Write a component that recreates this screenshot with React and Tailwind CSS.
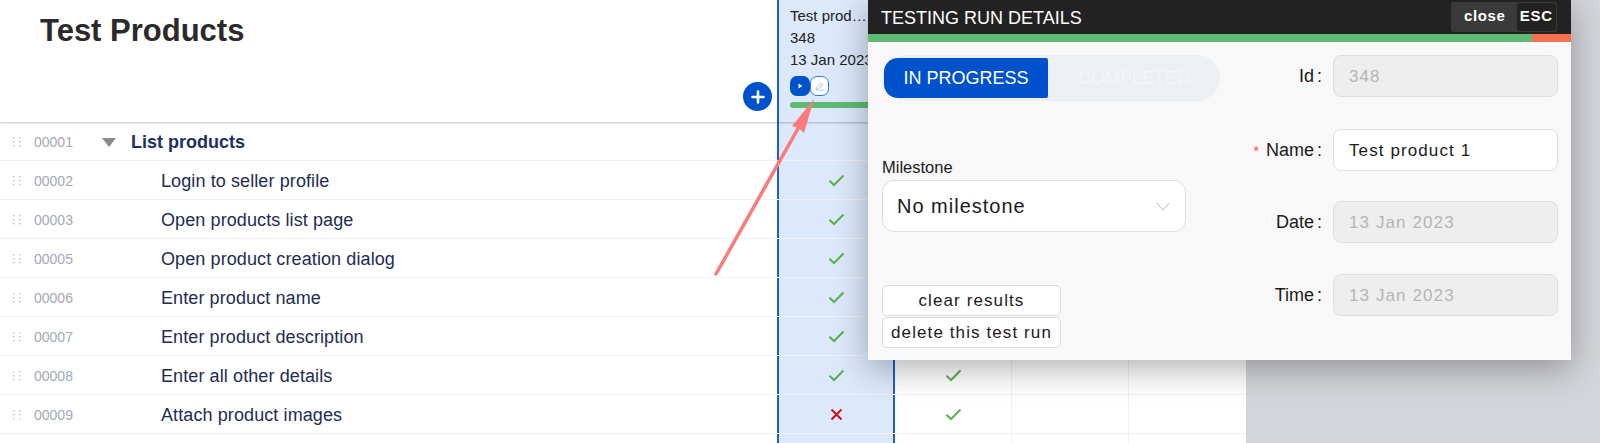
import React from "react";

const rows = [
  { id: "00001", name: "List products", group: true, a: null, b: null },
  { id: "00002", name: "Login to seller profile", a: "ok" },
  { id: "00003", name: "Open products list page", a: "ok" },
  { id: "00005", name: "Open product creation dialog", a: "ok" },
  { id: "00006", name: "Enter product name", a: "ok" },
  { id: "00007", name: "Enter product description", a: "ok" },
  { id: "00008", name: "Enter all other details", a: "ok", b: "ok" },
  { id: "00009", name: "Attach product images", a: "no", b: "ok" },
  { id: "", name: "" },
];

function Mark({ v }) {
  if (v === "ok")
    return (
      <svg width="17" height="13" viewBox="0 0 17 13" fill="none">
        <path d="M1.5 6.8 L6 11 L15.5 1.5" stroke="#5cb04f" strokeWidth="2" />
      </svg>
    );
  if (v === "no")
    return (
      <svg width="13" height="13" viewBox="0 0 13 13" fill="none">
        <path d="M1.5 1.5 L11.5 11.5 M11.5 1.5 L1.5 11.5" stroke="#cc1218" strokeWidth="2" />
      </svg>
    );
  return null;
}

function Grip() {
  return (
    <svg width="8" height="10" viewBox="0 0 8 10" fill="#b9bfca">
      {[0, 4, 8].map((y) => (
        <g key={y}>
          <rect x="0" y={y} width="1.4" height="1.4" />
          <rect x="6" y={y} width="1.4" height="1.4" />
        </g>
      ))}
    </svg>
  );
}

function Field({ label, value, disabled, required, className }) {
  return (
    <div className={"flex items-center h-[42px] " + (className || "")}>
      <div className="w-[115px] flex justify-end items-center pr-[11px] pt-[1px] text-[18px] text-[#1a1a1a]">
        {required && <span className="text-[#ff4d4f] mr-[7px] text-[15px] leading-none">*</span>}
        <span>{label}</span>
        <span className="ml-[3px]">:</span>
      </div>
      <div
        className={
          "w-[225px] h-[42px] rounded-[8px] border flex items-center px-[15px] pt-[1px] text-[17px] tracking-[1.1px] " +
          (disabled
            ? "bg-[#eeeeef] border-[#dfdfdf] text-[#b5b5b5]"
            : "bg-white border-[#e0e0e0] text-[#1a1a1a]")
        }
      >
        {value}
      </div>
    </div>
  );
}

export default function App() {
  return (
    <div
      className="relative w-[1600px] h-[443px] overflow-hidden bg-[#d4d5da] text-[#1a1a1a]"
      style={{ fontFamily: '"Liberation Sans", Arial, sans-serif' }}
    >
      <div className="w-[1246px] h-full bg-white flex flex-col">
        {/* Header */}
        <div className="h-[122px] flex shrink-0 shadow-[0_1px_2px_rgba(0,0,0,0.25)] relative z-[1] bg-white">
          <div className="w-[777px] shrink-0 relative pl-[40px] pt-[13px]">
            <h1 className="text-[31px] leading-[36px] font-bold text-[#2a2a2a]">Test Products</h1>
            <div className="absolute left-[743px] top-[82px] w-[29px] h-[29px] rounded-full bg-[#0052cc] flex items-center justify-center">
              <svg width="14" height="14" viewBox="0 0 14 14">
                <path d="M7 1.5 V12.5 M1.5 7 H12.5" stroke="#fff" strokeWidth="2.6" strokeLinecap="round" />
              </svg>
            </div>
          </div>
          <div className="w-[118px] shrink-0 bg-[#dce8fc] border-l-2 border-r-2 border-l-[#1f5fc8] border-r-transparent pl-[11px] pt-[5px] text-[15px] leading-[22px] text-[#222]">
            <div className="whitespace-nowrap">Test prod…</div>
            <div>348</div>
            <div className="whitespace-nowrap">13 Jan 2023</div>
            <div className="flex mt-[5px] h-[20px]">
              <div className="w-[20px] h-[20px] rounded-[7px] bg-[#0052cc] flex items-center justify-center">
                <svg width="5" height="6" viewBox="0 0 5 6"><path d="M0.5 0.5 L4.5 3 L0.5 5.5 Z" fill="#fff" /></svg>
              </div>
              <div className="w-[19px] h-[20px] rounded-[7px] bg-white border border-[#2f7be0] flex items-center justify-center">
                <svg width="9" height="9" viewBox="0 0 9 9" fill="none">
                  <path d="M1 8 L1.6 5.8 L6 1.4 L7.6 3 L3.2 7.4 Z M4.5 8.3 H8.3" stroke="#7d9ed6" strokeWidth="0.7" />
                </svg>
              </div>
            </div>
            <div className="mt-[6px] h-[6px] w-[120px] rounded-l-[3px] bg-[#5fbb72]" />
          </div>
          <div className="flex-1 bg-white" />
        </div>

        {/* Rows */}
        <div className="flex-1 flex flex-col">
          {rows.map((r, i) => (
            <div key={i} className="flex h-[39px] shrink-0 border-b border-[#f0f1f6]">
              <div className="w-[777px] shrink-0 flex items-center pt-[2px]">
                <div className="w-[34px] pl-[13px] flex items-center">{r.id && <Grip />}</div>
                <div className="w-[68px] text-[14px] text-[#a2a9ba]">{r.id}</div>
                {r.group ? (
                  <div className="flex items-center">
                    <svg width="14" height="9" viewBox="0 0 14 9" className="mr-[15px]">
                      <path d="M0 0 H14 L7 9 Z" fill="#8a8a8a" />
                    </svg>
                    <span className="text-[18px] font-bold text-[#1c3160]">{r.name}</span>
                  </div>
                ) : (
                  <span className="pl-[59px] text-[18px] tracking-[0.1px] text-[#1c2c55]">{r.name}</span>
                )}
              </div>
              <div className="w-[118px] shrink-0 bg-[#dce8fc] border-l-2 border-r-2 border-l-[#1f5fc8] border-r-[#1f5fc8] flex items-center justify-center">
                <Mark v={r.a} />
              </div>
              <div className="w-[117px] shrink-0 border-r border-[#f0f1f6] flex items-center justify-center">
                <Mark v={r.b} />
              </div>
              <div className="w-[117px] shrink-0 border-r border-[#f0f1f6]" />
              <div className="flex-1" />
            </div>
          ))}
        </div>
      </div>

      {/* Modal */}
      <div className="absolute left-[868px] top-0 w-[703px] h-[360px] bg-[#f8f8f9] shadow-[0_8px_32px_rgba(0,0,0,0.32)] z-10 flex flex-col">
        <div className="h-[34px] shrink-0 bg-[#222222] flex items-center justify-between pl-[13px] pr-[14px]">
          <span className="text-[18px] text-white pt-[3px]">TESTING RUN DETAILS</span>
          <div className="flex items-center h-[30px] w-[106px] rounded-[3px] bg-[#3a3a3a] pl-[13px] pr-[1px] py-[1px] mt-[-1px] font-bold text-[15px] tracking-[0.6px] text-white justify-between">
            <span>close</span>
            <span className="bg-[#222222] rounded-[3px] px-[3px] h-full flex items-center tracking-[0.8px]">ESC</span>
          </div>
        </div>
        <div className="h-[8px] shrink-0 flex">
          <div className="flex-1 bg-[#5fbb72]" />
          <div className="w-[39px] bg-[#f9704e]" />
        </div>
        <div className="flex flex-1">
          <div className="w-[350px] shrink-0 pl-[14px] pt-[13px] flex flex-col">
            <div className="w-[338px] h-[46px] rounded-[23px] bg-[#edf0f2] flex items-center pl-[2px]">
              <div className="w-[164px] h-[40px] bg-[#0052cc] rounded-l-[14px] rounded-r-[2px] flex items-center justify-center text-white text-[18px]">
                IN PROGRESS
              </div>
              <div className="flex-1 text-center text-[18px] text-[#f4f5f6]">COMPLETED</div>
            </div>
            <div className="mt-[56px] text-[16.5px] leading-[20px] text-[#1a1a1a]">Milestone</div>
            <div className="mt-[3px] w-[304px] h-[52px] rounded-[12px] bg-white border border-[#dedede] flex items-center justify-between pl-[14px] pr-[15px]">
              <span className="text-[20px] tracking-[1px] text-[#1a1a1a]">No milestone</span>
              <svg width="14" height="9" viewBox="0 0 14 9" fill="none">
                <path d="M1 1 L7 8 L13 1" stroke="#b9b9b9" strokeWidth="1" />
              </svg>
            </div>
            <div className="mt-[53px] w-[179px] flex flex-col gap-[1px] text-[17px] tracking-[1.1px] text-[#1a1a1a]">
              <div className="h-[31px] rounded-[5px] bg-white border border-[#dcdcdc] flex items-center justify-center">clear results</div>
              <div className="h-[31px] rounded-[5px] bg-white border border-[#dcdcdc] flex items-center justify-center whitespace-nowrap">delete this test run</div>
            </div>
          </div>
          <div className="flex-1 pt-[13px] flex flex-col">
            <Field label="Id" value="348" disabled />
            <Field label="Name" value="Test product 1" required className="mt-[32px]" />
            <Field label="Date" value="13 Jan 2023" disabled className="mt-[30px]" />
            <Field label="Time" value="13 Jan 2023" disabled className="mt-[31px]" />
          </div>
        </div>
      </div>

      {/* Arrow annotation */}
      <svg className="absolute left-0 top-0 z-[5] pointer-events-none" width="1600" height="443" viewBox="0 0 1600 443" fill="none">
        <path d="M716 274 L800 125" stroke="#fb7b79" strokeWidth="3.5" strokeLinecap="round" />
        <path d="M814 99 L792 126 L799 128 L804 133 Z" fill="#fb7b79" />
      </svg>
    </div>
  );
}
